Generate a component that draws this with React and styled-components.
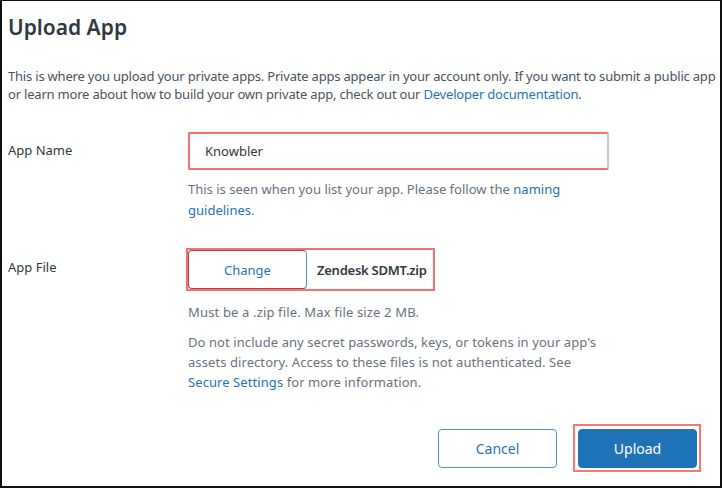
import React from "react";
import styled, { createGlobalStyle } from "styled-components";

const GlobalStyle = createGlobalStyle`
  html, body {
    margin: 0;
    padding: 0;
    background: #ffffff;
  }
  body {
    font-family: "Noto Sans", "Open Sans", sans-serif;
    -webkit-font-smoothing: antialiased;
  }
`;

const Frame = styled.div`
  box-sizing: border-box;
  width: 722px;
  height: 488px;
  border: 2px solid #111;
  border-top-width: 1px;
  padding: 11px 22px 0 6px;
  display: flex;
  flex-direction: column;
`;

const Title = styled.h1`
  margin: 0;
  font-size: 21px;
  line-height: 30px;
  font-weight: 600;
  color: #2f3941;
`;

const Intro = styled.p`
  margin: 25px 0 0;
  font-size: 13px;
  letter-spacing: -0.2px;
  line-height: 18px;
  color: #49545c;
  white-space: nowrap;
`;

const Link = styled.a`
  color: #1f73b7;
  text-decoration: none;
`;

const FieldRow = styled.div`
  display: grid;
  grid-template-columns: 180px 421px;
  margin-top: ${(p) => p.$top}px;
`;

const Label = styled.label`
  font-size: 13px;
  line-height: 20px;
  color: #2f3941;
  padding-top: ${(p) => p.$pad}px;
`;

const Field = styled.div`
  display: flex;
  flex-direction: column;
  align-items: flex-start;
`;

const TextInput = styled.div`
  box-sizing: border-box;
  width: 421px;
  height: 38px;
  border: 2px solid #f27272;
  border-right-color: #c9c9c9;
  border-radius: 2px;
  padding: 0 15px;
  display: flex;
  align-items: center;
  font-size: 13px;
  color: #2f3941;
`;

const Hint = styled.p`
  margin: ${(p) => p.$top}px 0 0;
  font-size: 13px;
  letter-spacing: ${(p) => p.$ls || 0}px;
  line-height: ${(p) => p.$lh}px;
  color: #68737d;
  white-space: nowrap;
`;

const FileGroup = styled.div`
  display: flex;
  align-items: center;
  outline: 2px solid #f27272;
  height: 39px;
  margin-top: 1px;
`;

const ChangeButton = styled.button`
  box-sizing: border-box;
  width: 119px;
  height: 39px;
  background: #fff;
  border: 1px solid #5293c7;
  border-left-color: #b43c55;
  border-top-color: #b43c55;
  border-bottom-color: #b43c55;
  border-radius: 4px;
  font-family: inherit;
  font-size: 13px;
  color: #1f73b7;
`;

const FileName = styled.span`
  padding: 0 6px 0 10px;
  font-size: 13px;
  letter-spacing: -0.25px;
  font-weight: 600;
  color: #2f3941;
`;

const Footer = styled.div`
  display: flex;
  justify-content: flex-end;
  align-items: center;
  gap: 16px;
  margin-top: 32px;
  margin-right: -3px;
`;

const Button = styled.button`
  box-sizing: border-box;
  width: 119px;
  height: 39px;
  border-radius: 4px;
  font-family: inherit;
  font-size: 14px;
  border: 1px solid ${(p) => (p.$primary ? "#1f73b7" : "#5293c7")};
  background: ${(p) => (p.$primary ? "#1f73b7" : "#fff")};
  color: ${(p) => (p.$primary ? "#fff" : "#1f73b7")};
`;

const Highlight = styled.div`
  display: flex;
  border: 2px solid #f47878;
  padding: 3px 2px 2px 3px;
`;

export default function App() {
  return (
    <>
      <GlobalStyle />
      <Frame>
        <Title>Upload App</Title>
        <Intro>
          This is where you upload your private apps. Private apps appear in your account only. If you want to
          submit a public app
          <br />
          or learn more about how to build your own private app, check out our{" "}
          <Link href="#">Developer documentation</Link>.
        </Intro>

        <FieldRow $top={29}>
          <Label $pad={8}>App Name</Label>
          <Field>
            <TextInput>Knowbler</TextInput>
            <Hint $top={9} $lh={21}>
              This is seen when you list your app. Please follow the <Link href="#">naming</Link>
              <br />
              <Link href="#">guidelines</Link>.
            </Hint>
          </Field>
        </FieldRow>

        <FieldRow $top={28}>
          <Label $pad={8}>App File</Label>
          <Field>
            <FileGroup>
              <ChangeButton>Change</ChangeButton>
              <FileName>Zendesk SDMT.zip</FileName>
            </FileGroup>
            <Hint $top={13} $lh={20} $ls={0.15}>
              Must be a .zip file. Max file size 2 MB.
            </Hint>
            <Hint $top={10} $lh={20} $ls={0.08}>
              Do not include any secret passwords, keys, or tokens in your app's
              <br />
              assets directory. Access to these files is not authenticated. See
              <br />
              <Link href="#">Secure Settings</Link> for more information.
            </Hint>
          </Field>
        </FieldRow>

        <Footer>
          <Button>Cancel</Button>
          <Highlight>
            <Button $primary>Upload</Button>
          </Highlight>
        </Footer>
      </Frame>
    </>
  );
}
